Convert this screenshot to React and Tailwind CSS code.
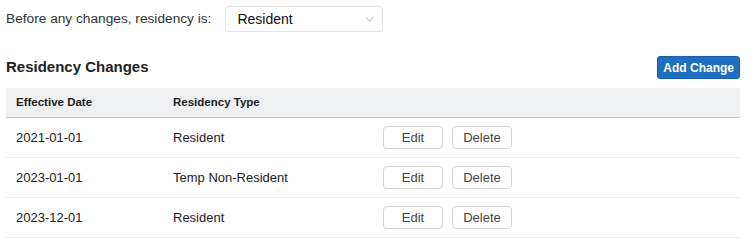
import { ChevronDown } from 'lucide-react';

const rows = [
    { date: '2021-01-01', type: 'Resident' },
    { date: '2023-01-01', type: 'Temp Non-Resident' },
    { date: '2023-12-01', type: 'Resident' },
];

const App = () => {
    return (
        <div className="w-[750px] h-[244px] bg-white text-[#222] font-['Liberation_Sans',sans-serif] px-[6px] pt-[6px]">
            {/* Initial residency */}
            <div className="flex items-center gap-[14px]">
                <span className="text-[13.7px] text-[#333]">Before any changes, residency is:</span>
                <div className="flex items-center justify-between w-[158px] h-[26px] border border-[#e2e2e2] rounded-[4px] pl-[11px] pr-[6px] text-[14px] text-[#111]">
                    <span>Resident</span>
                    <ChevronDown size={13} strokeWidth={1.5} className="text-[#888]" />
                </div>
            </div>

            {/* Header row */}
            <div className="flex items-center justify-between mt-[24px] pr-[4px]">
                <h2 className="text-[15px] font-bold text-[#222]">Residency Changes</h2>
                <button className="h-[23px] px-[5px] bg-[#1f6fbf] text-white text-[12px] font-bold rounded-[3px] border border-[#195fa6]">
                    Add Change
                </button>
            </div>

            {/* Table */}
            <div className="mt-[9px] w-[734px]">
                <div className="flex items-center h-[30px] bg-[#eff0f2] border-b border-[#c8c8c8] text-[11.5px] font-bold text-[#222]">
                    <div className="w-[167px] pl-[10px]">Effective Date</div>
                    <div>Residency Type</div>
                </div>
                {rows.map((r) => (
                    <div key={r.date + r.type} className="flex items-center h-[40px] border-b border-[#eee] text-[13px] text-[#222]">
                        <div className="w-[167px] pl-[10px]">{r.date}</div>
                        <div className="w-[210px]">{r.type}</div>
                        <div className="flex gap-[9px]">
                            <button className="w-[60px] h-[23px] border border-[#d4d4d4] rounded-[4px] text-[13px] text-[#444] bg-white">Edit</button>
                            <button className="w-[60px] h-[23px] border border-[#d4d4d4] rounded-[4px] text-[13px] text-[#444] bg-white">Delete</button>
                        </div>
                    </div>
                ))}
            </div>
        </div>
    );
};

export default App;
